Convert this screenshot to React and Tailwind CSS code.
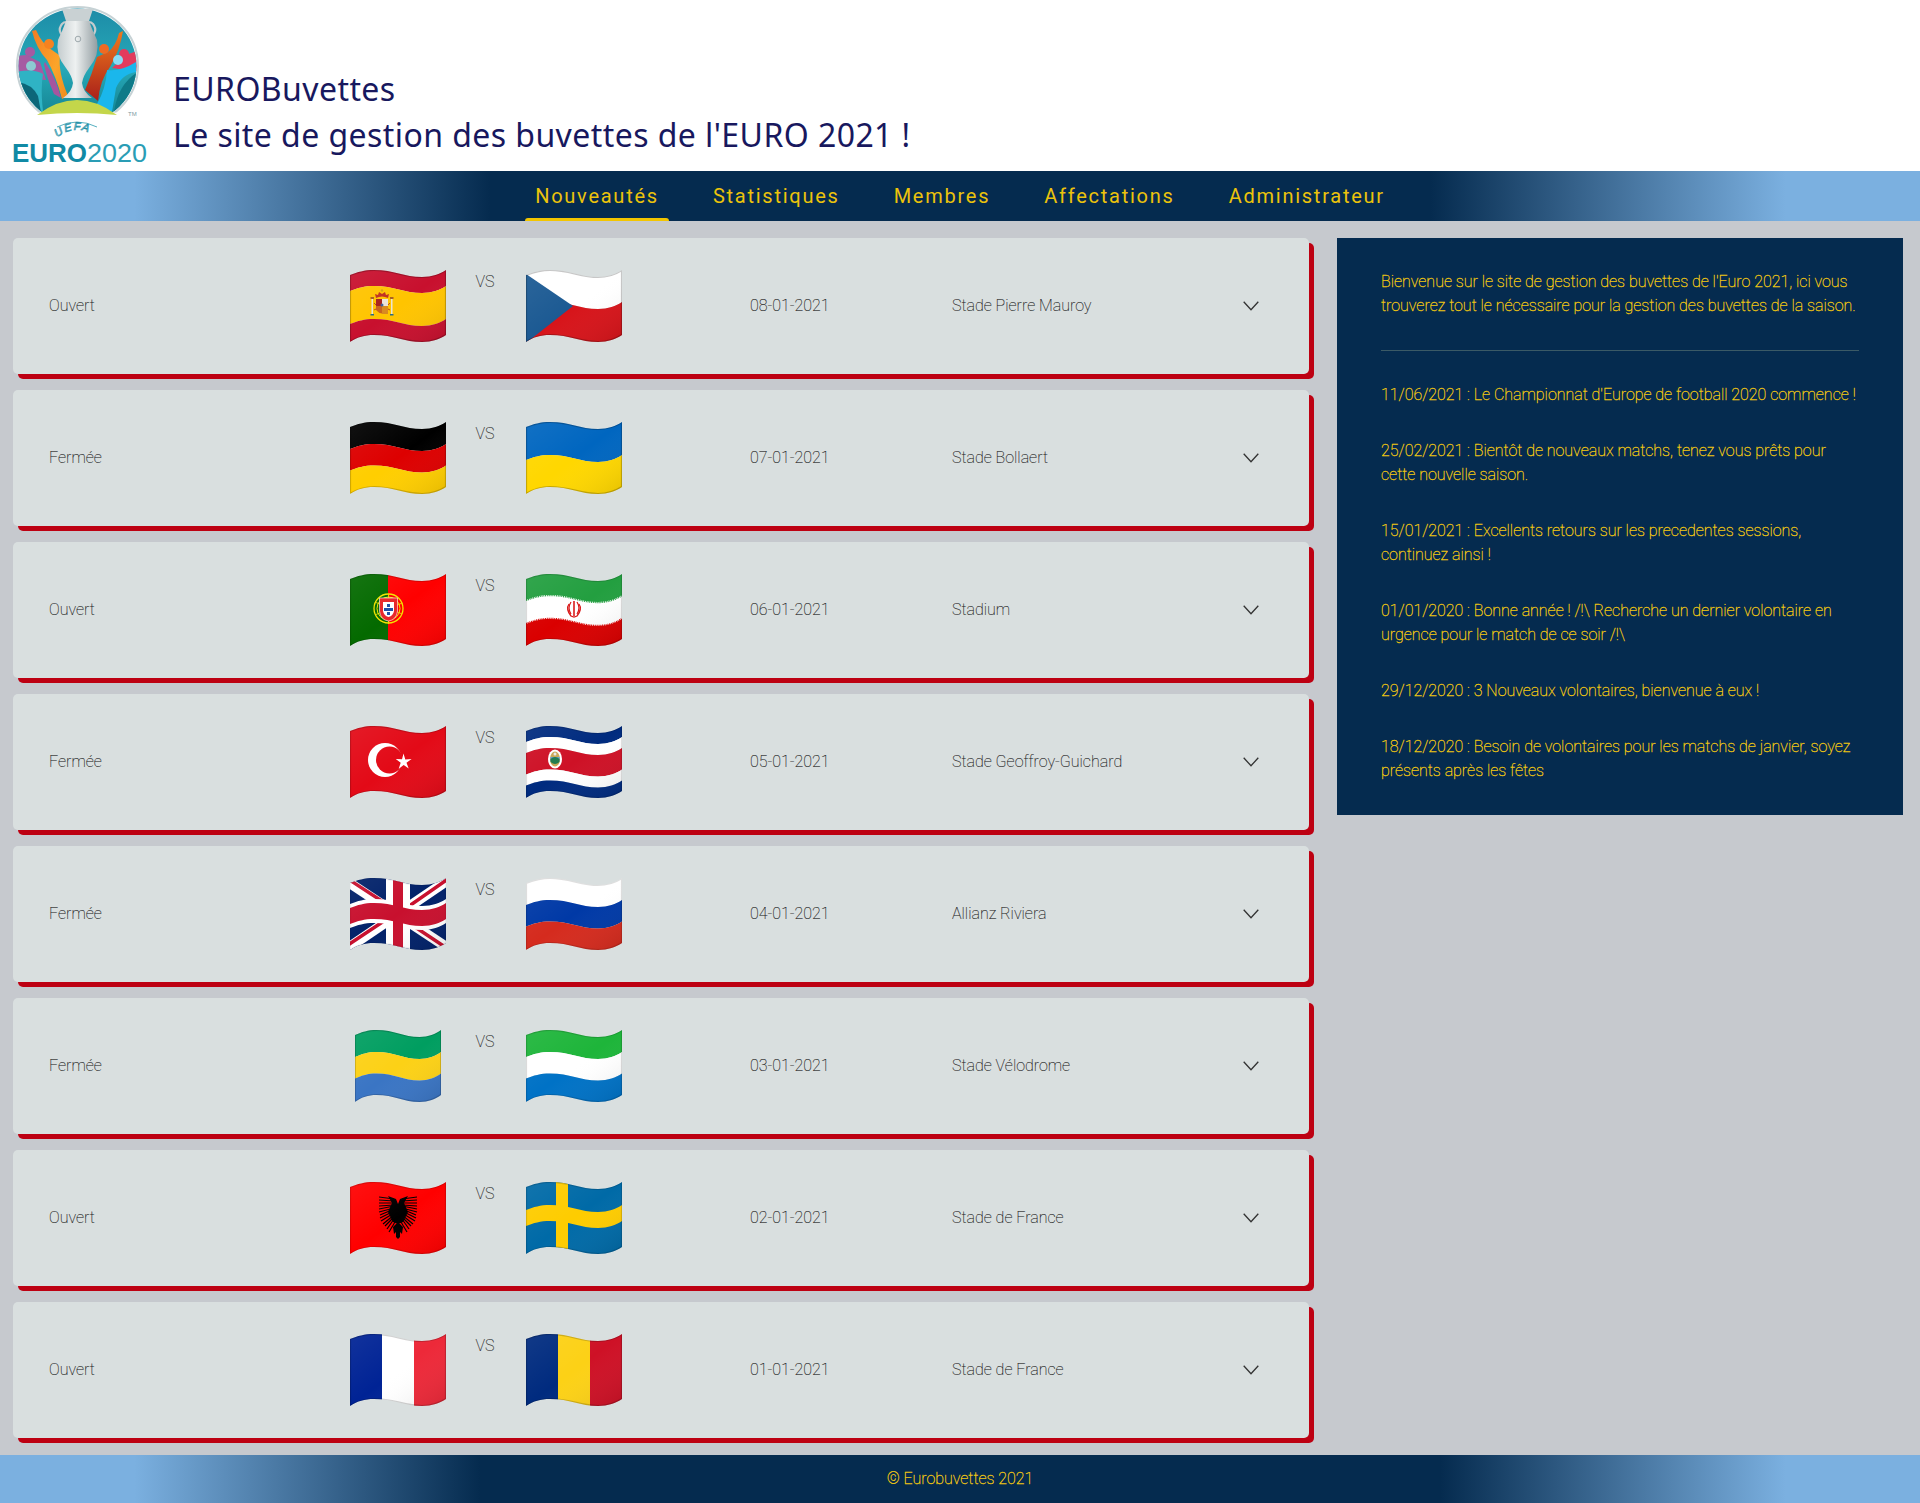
import React, { useId } from "react";

const wave = (d) => `M0 ${5 + d}C8 ${2 + d} 14 ${d} 24 ${d}C44 ${d} 54 ${7 + d} 72 ${7 + d}C82 ${7 + d} 90 ${4 + d} 96 ${d}`;
const waveBack = (d) => `L96 ${d}C90 ${4 + d} 82 ${7 + d} 72 ${7 + d}C54 ${7 + d} 44 ${d} 24 ${d}C14 ${d} 8 ${2 + d} 0 ${5 + d}Z`;
const band = (a, b) => wave(a) + waveBack(b);
const OUTLINE = `M0 5C8 2 14 0 24 0C44 0 54 7 72 7C82 7 90 4 96 0V65C90 69 82 72 72 72C54 72 44 65 24 65C14 65 8 67 0 72Z`;

function B({ a, b, c }) {
  return <path d={band(a, b)} fill={c} />;
}

function Flag({ children, w = 96, edge = 0.22 }) {
  const id = useId().replace(/[^a-zA-Z0-9]/g, "");
  return (
    <svg width={w} height="72" viewBox="0 0 96 72" preserveAspectRatio="none" className="block shrink-0">
      <defs>
        <clipPath id={`c${id}`}>
          <path d={OUTLINE} />
        </clipPath>
        <linearGradient id={`g${id}`} x1="0" y1="0" x2="1" y2="1">
          <stop offset="0" stopColor="#fff" stopOpacity="0.07" />
          <stop offset="0.5" stopColor="#fff" stopOpacity="0" />
          <stop offset="1" stopColor="#000" stopOpacity="0.1" />
        </linearGradient>
      </defs>
      <g clipPath={`url(#c${id})`}>
        {children}
        <rect width="96" height="72" fill={`url(#g${id})`} />
        <path d={OUTLINE} fill="none" stroke="#000" strokeOpacity={edge} strokeWidth="2.2" />
      </g>
    </svg>
  );
}

const Spain = () => (
  <Flag>
    <B a={-2} b={16} c="#c8102e" />
    <B a={16} b={49} c="#ffc400" />
    <B a={49} b={67} c="#c8102e" />
    <path d="M21.500 29h1.500v15h-1.500zM41 29h1.500v15H41z" fill="#e9e4d4" />
    <path d="M20.500 27h3.500v2h-3.500zM40 27h3.500v2H40z" fill="#a8601f" />
    <path d="M20.500 44h3.500v1.500h-3.500zM40 44h3.500v1.500H40z" fill="#2b6c80" />
    <path d="M26 29h12v11q-6 7-12 0z" fill="#c9621c" />
    <rect x="26" y="29" width="6" height="7" fill="#a8201c" />
    <rect x="32" y="29" width="6" height="7" fill="#ece3da" />
    <rect x="32" y="36" width="6" height="8" fill="#d98a1f" />
    <circle cx="32" cy="35" r="1.500" fill="#3f5f9a" />
    <path d="M26 28q6-3 12 0l1-4-3 1-1-3-3 2-3-2-1 3-3-1z" fill="#c03020" />
    <circle cx="32" cy="20.500" r="1.200" fill="#d4a017" />
    <path d="M24 33l2 2M40 33l-2 2M24 40l2-1M40 40l-2-1" stroke="#b8342a" strokeWidth="0.900" />
  </Flag>
);
const Czech = () => (
  <Flag>
    <B a={-2} b={32} c="#fff" />
    <B a={32} b={67} c="#d7141a" />
    <path d="M0 4L47 36 0 73z" fill="#1c5a93" />
  </Flag>
);
const Germany = () => (
  <Flag edge={0.18}>
    <B a={-2} b={22} c="#000" />
    <B a={22} b={43.500} c="#dd0000" />
    <B a={43.500} b={67} c="#ffce00" />
  </Flag>
);
const Ukraine = () => (
  <Flag>
    <B a={-2} b={33} c="#0066c0" />
    <B a={33} b={67} c="#ffd700" />
  </Flag>
);
const Portugal = () => (
  <Flag edge={0.15}>
    <rect width="38.400" height="72" fill="#046a00" />
    <rect x="38" width="58" height="72" fill="#ff0000" />
    <circle cx="38.500" cy="34.500" r="14.500" fill="none" stroke="#f3e300" strokeWidth="1.300" />
    <circle cx="38.500" cy="34.500" r="11.500" fill="none" stroke="#f3e300" strokeWidth="1" />
    <path d="M25 28l27 12M25 41l27-12M38.500 20v30" stroke="#f3e300" strokeWidth="0.800" />
    <path d="M29.500 24h18v13q-1 9-9 10q-8-1-9-10z" fill="#e8262a" stroke="#fff" strokeWidth="0.600" />
    <path d="M33 28h11v9q-1 5-5.500 6q-4.500-1-5.500-6z" fill="#fff" />
    <path d="M37 30h3v3h-3zM37 34h3v3h-3zM37 38h3v3h-3zM34 34h3v3h-3zM40 34h3v3h-3z" fill="#1f4fa8" />
  </Flag>
);
const Iran = () => (
  <Flag edge={0.14}>
    <B a={-2} b={21} c="#239f40" />
    <B a={21} b={45} c="#fff" />
    <B a={45} b={67} c="#da0000" />
    <path d={wave(21)} fill="none" stroke="#239f40" strokeWidth="2.400" strokeDasharray="1 0.800" />
    <path d={wave(45)} fill="none" stroke="#da0000" strokeWidth="2.400" strokeDasharray="1 0.800" />
    <g fill="none" stroke="#da1a1a" strokeWidth="1.300">
      <path d="M48 27v15" strokeWidth="1.600" />
      <path d="M45 28q-4 6 0 12M51 28q4 6 0 12" />
      <path d="M43 30q-3.500 5 2 12l3 1 3-1q5.500-7 2-12" />
    </g>
  </Flag>
);
const Turkey = () => (
  <Flag edge={0.16}>
    <rect width="96" height="72" fill="#e30a17" />
    <circle cx="35" cy="34" r="17" fill="#fff" />
    <circle cx="39.500" cy="34" r="13.500" fill="#e30a17" />
    <path d="M53.500 27.500l1.800 5.900 6.300-.3-5.100 3.700 2.200 5.800-5-3.700-5 3.800 2-5.900-5-3.800 6.300.2z" fill="#fff" />
  </Flag>
);
const CostaRica = () => (
  <Flag edge={0.12}>
    <B a={-2} b={11} c="#002b7f" />
    <B a={11} b={22} c="#fff" />
    <B a={22} b={43.500} c="#ce1126" />
    <B a={43.500} b={54.500} c="#fff" />
    <B a={54.500} b={67} c="#002b7f" />
    <ellipse cx="29" cy="33" rx="7" ry="9.500" fill="#fff" />
    <ellipse cx="29" cy="33" rx="5" ry="7.500" fill="#c9a655" />
    <path d="M24.500 31h9v4h-9z" fill="#5b9bd5" />
    <path d="M24.500 33q4.500-4 9 0v3q-4.500 4-9 0z" fill="#1f7a4d" />
    <circle cx="29" cy="28" r="1.500" fill="#e8e8e8" />
  </Flag>
);
const UK = () => (
  <Flag edge={0.06}>
    <rect width="96" height="72" fill="#012169" />
    <g stroke="#fff" strokeWidth="10">
      <path d="M-2 4L98 70" />
      <path d="M-2 70L98 2" />
    </g>
    <g stroke="#c8102e" strokeWidth="3.400">
      <path d="M-2 1L44 31M56 43L98 71" />
      <path d="M-2 67L40 39M52 33L98 1" />
    </g>
    <B a={21} b={45} c="#fff" />
    <rect x="36" width="24" height="72" fill="#fff" />
    <B a={25} b={41} c="#c8102e" />
    <rect x="43" width="10" height="72" fill="#c8102e" />
  </Flag>
);
const Russia = () => (
  <Flag edge={0.13}>
    <B a={-2} b={22} c="#fff" />
    <B a={22} b={43.500} c="#0039a6" />
    <B a={43.500} b={67} c="#d52b1e" />
  </Flag>
);
const Gabon = () => (
  <Flag w={86} edge={0.16}>
    <B a={-2} b={22} c="#009e60" />
    <B a={22} b={43.500} c="#fcd116" />
    <B a={43.500} b={67} c="#3a75c4" />
  </Flag>
);
const SierraLeone = () => (
  <Flag edge={0.14}>
    <B a={-2} b={22} c="#1eb53a" />
    <B a={22} b={43.500} c="#fff" />
    <B a={43.500} b={67} c="#0072c6" />
  </Flag>
);
const feathers = [
  [44, 17, 29, 15], [44, 19, 29, 18], [44, 21, 29, 21], [44, 23, 29, 24], [44, 24, 29, 27], [44, 26, 29, 30], [44, 27, 30, 33],
  [44, 29, 30, 36], [44, 31, 31, 39], [44, 33, 33, 42], [44, 35, 35, 44], [44, 37, 37, 47], [45, 40, 39, 50],
];
const WingHalf = () => (
  <g>
    <path d="M48 22L46 17L38 14L42 21L38 30L43 40L48 42z" fill="#000" />
    <g stroke="#000" strokeWidth="1.200">
      {feathers.map((f, i) => (
        <line key={i} x1={f[0]} y1={f[1]} x2={f[2]} y2={f[3]} />
      ))}
    </g>
    <path d="M48 40L43 45L44 52L46 50L46 55L48 57z" fill="#000" />
  </g>
);
const Albania = () => (
  <Flag edge={0.14}>
    <rect width="96" height="72" fill="#ff0000" />
    <WingHalf />
    <g transform="translate(96 0) scale(-1 1)">
      <WingHalf />
    </g>
  </Flag>
);
const Sweden = () => (
  <Flag edge={0.14}>
    <rect width="96" height="72" fill="#006aa7" />
    <B a={23} b={39} c="#fecc00" />
    <rect x="30" width="12" height="72" fill="#fecc00" />
  </Flag>
);
const France = () => (
  <Flag edge={0.18}>
    <rect width="32" height="72" fill="#002395" />
    <rect x="32" width="32" height="72" fill="#fff" />
    <rect x="64" width="32" height="72" fill="#ed2939" />
  </Flag>
);
const Romania = () => (
  <Flag edge={0.18}>
    <rect width="32" height="72" fill="#002b7f" />
    <rect x="32" width="32" height="72" fill="#fcd116" />
    <rect x="64" width="32" height="72" fill="#ce1126" />
  </Flag>
);

const matches = [
  ["Ouvert", Spain, Czech, "08-01-2021", "Stade Pierre Mauroy"],
  ["Fermée", Germany, Ukraine, "07-01-2021", "Stade Bollaert"],
  ["Ouvert", Portugal, Iran, "06-01-2021", "Stadium"],
  ["Fermée", Turkey, CostaRica, "05-01-2021", "Stade Geoffroy-Guichard"],
  ["Fermée", UK, Russia, "04-01-2021", "Allianz Riviera"],
  ["Fermée", Gabon, SierraLeone, "03-01-2021", "Stade Vélodrome"],
  ["Ouvert", Albania, Sweden, "02-01-2021", "Stade de France"],
  ["Ouvert", France, Romania, "01-01-2021", "Stade de France"],
];

const news = [
  "11/06/2021 : Le Championnat d'Europe de football 2020 commence !",
  "25/02/2021 : Bientôt de nouveaux matchs, tenez vous prêts pour cette nouvelle saison.",
  "15/01/2021 : Excellents retours sur les precedentes sessions, continuez ainsi !",
  "01/01/2020 : Bonne année ! /!\\ Recherche un dernier volontaire en urgence pour le match de ce soir /!\\",
  "29/12/2020 : 3 Nouveaux volontaires, bienvenue à eux !",
  "18/12/2020 : Besoin de volontaires pour les matchs de janvier, soyez présents après les fêtes",
];

const navItems = ["Nouveautés", "Statistiques", "Membres", "Affectations", "Administrateur"];

function Logo() {
  return (
    <svg width="160" height="171" viewBox="0 0 160 171" className="block shrink-0">
      <defs>
        <clipPath id="logoClip">
          <ellipse cx="77.500" cy="66" rx="59" ry="57.500" />
        </clipPath>
        <linearGradient id="logoBg" x1="0" y1="0" x2="0" y2="1">
          <stop offset="0" stopColor="#1c8aa6" />
          <stop offset="0.5" stopColor="#27a9b8" />
          <stop offset="1" stopColor="#0f7a88" />
        </linearGradient>
        <linearGradient id="cup" x1="0" y1="0" x2="1" y2="0">
          <stop offset="0" stopColor="#c4ccce" />
          <stop offset="0.45" stopColor="#eef1f1" />
          <stop offset="1" stopColor="#929da1" />
        </linearGradient>
        <linearGradient id="orangeL" x1="0" y1="0" x2="1" y2="1">
          <stop offset="0" stopColor="#f47c20" />
          <stop offset="0.6" stopColor="#fba52a" />
          <stop offset="1" stopColor="#ef8a1c" />
        </linearGradient>
        <linearGradient id="orangeR" x1="0" y1="0" x2="0" y2="1">
          <stop offset="0" stopColor="#f07a1c" />
          <stop offset="1" stopColor="#a81f1a" />
        </linearGradient>
      </defs>
      <ellipse cx="77.500" cy="66" rx="60.500" ry="59" fill="#fff" stroke="#c6d2d5" strokeWidth="2" />
      <g clipPath="url(#logoClip)">
        <rect x="15" y="5" width="125" height="125" fill="url(#logoBg)" />
        <path d="M16 56L26 55L40 62L46 80L18 78z" fill="#a65aa2" />
        <circle cx="30" cy="52" r="5" fill="#a65aa2" />
        <circle cx="31" cy="66" r="5" fill="#8ccbd2" />
        <path d="M16 72Q34 68 43 74Q40 92 44 118H16z" fill="#2fb3c4" />
        <path d="M18 82Q32 84 38 96L42 118H18z" fill="#0c6678" />
        <path d="M45 62Q56 78 61 98L54 94Q46 76 44 64z" fill="#a5559f" />
        <path d="M32 31L36 30Q42 44 52 50Q58 54 60 56Q58 72 68 96L62 99Q56 76 47 60Q36 48 32 31z" fill="url(#orangeL)" />
        <circle cx="49" cy="44" r="5" fill="#f6821f" />
        <path d="M140 50L126 55L112 68L140 72z" fill="#e33b5d" />
        <circle cx="124" cy="54" r="5" fill="#e33b5d" />
        <path d="M123 31L119 33Q116 46 108 52L97 57Q92 74 85 90L98 101Q100 80 110 67Q120 50 123 31z" fill="url(#orangeR)" />
        <circle cx="104" cy="49" r="5" fill="#ef6a22" />
        <circle cx="118" cy="60" r="5" fill="#8adcf5" />
        <path d="M107 70Q120 72 136 62V72Q122 74 116 88L112 112L97 104Q106 88 107 70z" fill="#1ab7ec" />
        <path d="M114 112Q118 84 138 72V118z" fill="#0e7a88" />
      </g>
      <path d="M62 9H93L89 21H66z" fill="#c9d1d3" />
      <path d="M66 38q-10-6-4-14q3-3 7-1M89 38q10-6 4-14q-3-3-7-1" fill="none" stroke="#c3cbcd" strokeWidth="2.200" />
      <path d="M66 21Q62 32 58 40Q55 55 66 68Q72 76 73 83Q72 92 63 98H92Q83 92 82 83Q83 76 89 68Q100 55 97 40Q93 32 89 21z" fill="url(#cup)" />
      <circle cx="78" cy="39" r="2.800" fill="none" stroke="#9ea9ad" strokeWidth="1" />
      <path d="M34 113L46 130H109L121 113Q77 109 34 113z" fill="#fff" />
      <path d="M37 115Q77 85 117 115Q77 111 37 115z" fill="#c4d64a" />
      <path d="M57 127Q77 117 97 127" stroke="#2b9ab0" strokeWidth="0.800" fill="none" />
      <path id="uefaArc" d="M54 140Q77 120 100 140" fill="none" />
      <text className="font-['Liberation_Sans'] italic" fontSize="11" fill="#fff" stroke="#2592a9" strokeWidth="0.700" letterSpacing="1.500">
        <textPath href="#uefaArc" startOffset="4">UEFA</textPath>
      </text>
      <text x="128" y="116" fontSize="6" fill="#7d9aa3" className="font-['Liberation_Sans']">TM</text>
      <text x="12" y="162" fontSize="26" fontWeight="700" fill="#118aa5" textLength="75" lengthAdjust="spacingAndGlyphs" className="font-['Liberation_Sans']">EURO</text>
      <text x="87" y="162" fontSize="26" fill="#2a9db5" textLength="60" lengthAdjust="spacingAndGlyphs" className="font-['Liberation_Sans']">2020</text>
    </svg>
  );
}

function MatchCard({ status, Left, Right, date, place }) {
  return (
    <div className="flex h-[136px] items-center rounded-[5px] bg-[#d9dfdf] pl-[36px] font-['Roboto'] text-[16px] font-thin text-[#111] shadow-[5px_5px_0_#bd0012] [-webkit-text-stroke:0.15px_#333]">
      <div className="w-[301px]">{status}</div>
      <div className="flex w-[96px] justify-center">
        <Left />
      </div>
      <div className="mt-[32px] w-[80px] self-start pr-[2px] text-center leading-[24px] text-[#222]">VS</div>
      <div className="flex w-[96px] justify-center">
        <Right />
      </div>
      <div className="ml-[128px] w-[202px]">{date}</div>
      <div className="w-[291px]">{place}</div>
      <svg width="16" height="10" viewBox="0 0 16 10" className="shrink-0">
        <path d="M0.700 0.700L8 8.800L15.300 0.700" fill="none" stroke="#333" strokeWidth="1.300" />
      </svg>
    </div>
  );
}

export default function App() {
  return (
    <div className="flex h-[1503px] flex-col bg-[#c6c9ce] font-['Roboto']">
      <header className="flex h-[171px] items-end bg-white">
        <Logo />
        <div className="ml-[13px] pb-[13px] font-['Noto_Sans',sans-serif] text-[32px] leading-[46px] tracking-[0.430px] text-[#18185e]">
          <div>EUROBuvettes</div>
          <div>Le site de gestion des buvettes de l'EURO 2021 !</div>
        </div>
      </header>
      <nav className="flex h-[50px] items-center justify-center gap-[34px] bg-[linear-gradient(90deg,#7bb0e0_7%,#052b4f_25.500%,#052b4f_74.500%,#7bb0e0_93%)]">
        {navItems.map((n, i) => (
          <a key={n} className="relative flex h-[50px] items-center px-[10px] text-[20px] tracking-[1.750px] text-[#ecc30b]">
            {n}
            {i === 0 && <span className="absolute bottom-0 left-0 right-0 h-[3px] rounded-t-[3px] bg-[#f2c500]" />}
          </a>
        ))}
      </nav>
      <main className="flex flex-1 items-start pt-[17px]">
        <div className="ml-[13px] flex w-[1296px] flex-col gap-[16px]">
          {matches.map((m) => (
            <MatchCard key={m[3]} status={m[0]} Left={m[1]} Right={m[2]} date={m[3]} place={m[4]} />
          ))}
        </div>
        <aside className="ml-[28px] w-[566px] bg-[#052b4f] px-[44px] py-[32px] text-[16px] font-thin leading-[24px] text-[#f5cb0f] [-webkit-text-stroke:0.3px_#f5cb0f]">
          <p>Bienvenue sur le site de gestion des buvettes de l'Euro 2021, ici vous trouverez tout le nécessaire pour la gestion des buvettes de la saison.</p>
          <hr className="my-[32px] border-t border-[#3b5a66]" />
          <div className="flex flex-col gap-[32px]">
            {news.map((t) => (
              <p key={t}>{t}</p>
            ))}
          </div>
        </aside>
      </main>
      <footer className="flex h-[48px] items-center justify-center bg-[linear-gradient(90deg,#7bb0e0_7%,#052b4f_25%,#052b4f_75%,#7bb0e0_93%)] text-[16px] font-thin text-[#f5cb0f] [-webkit-text-stroke:0.3px_#f5cb0f]">
        © Eurobuvettes 2021
      </footer>
    </div>
  );
}
